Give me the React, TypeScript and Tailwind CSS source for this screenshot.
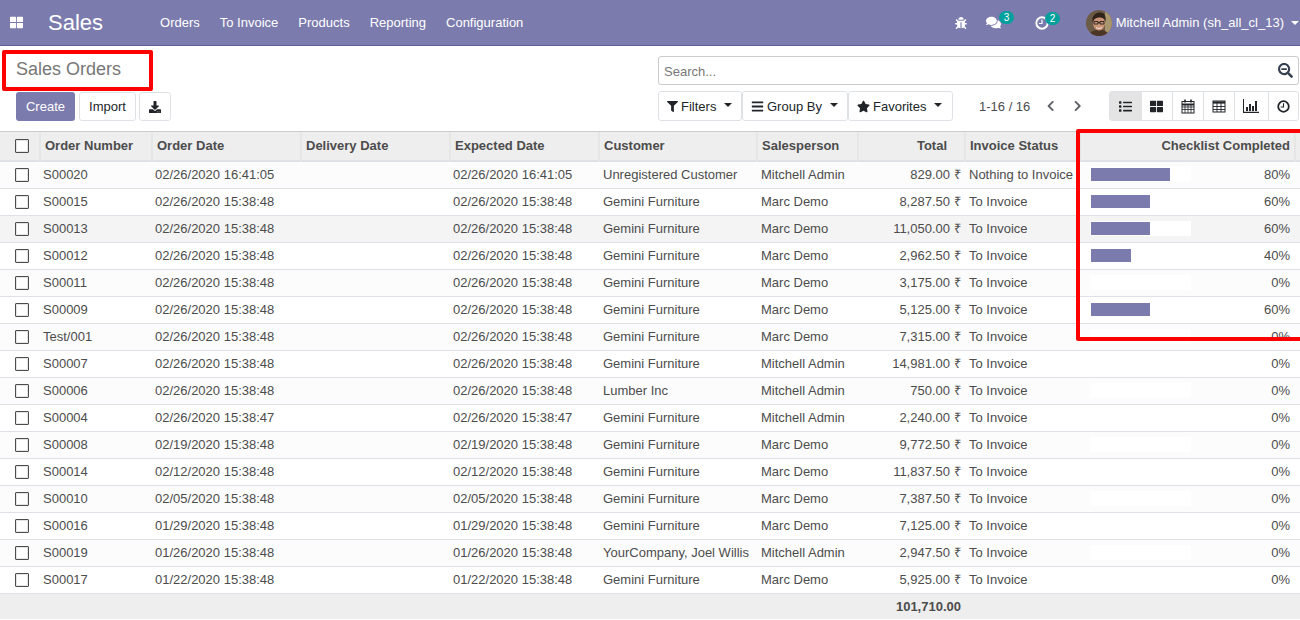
import { FaBug, FaComments, FaThLarge, FaDownload, FaFilter, FaBars, FaStar, FaList, FaSearchMinus, FaChevronLeft, FaChevronRight } from "react-icons/fa";

const menus = ["Orders", "To Invoice", "Products", "Reporting", "Configuration"];

const columns = [
  { label: "Order Number", width: "w-[112px]" },
  { label: "Order Date", width: "w-[149px]" },
  { label: "Delivery Date", width: "w-[149px]" },
  { label: "Expected Date", width: "w-[149px]" },
  { label: "Customer", width: "w-[158px]" },
  { label: "Salesperson", width: "w-[101px]" },
];

const orders = [
  ["S00020", "02/26/2020 16:41:05", "02/26/2020 16:41:05", "Unregistered Customer", "Mitchell Admin", "829.00", "Nothing to Invoice", 80],
  ["S00015", "02/26/2020 15:38:48", "02/26/2020 15:38:48", "Gemini Furniture", "Marc Demo", "8,287.50", "To Invoice", 60],
  ["S00013", "02/26/2020 15:38:48", "02/26/2020 15:38:48", "Gemini Furniture", "Marc Demo", "11,050.00", "To Invoice", 60],
  ["S00012", "02/26/2020 15:38:48", "02/26/2020 15:38:48", "Gemini Furniture", "Marc Demo", "2,962.50", "To Invoice", 40],
  ["S00011", "02/26/2020 15:38:48", "02/26/2020 15:38:48", "Gemini Furniture", "Marc Demo", "3,175.00", "To Invoice", 0],
  ["S00009", "02/26/2020 15:38:48", "02/26/2020 15:38:48", "Gemini Furniture", "Marc Demo", "5,125.00", "To Invoice", 60],
  ["Test/001", "02/26/2020 15:38:48", "02/26/2020 15:38:48", "Gemini Furniture", "Marc Demo", "7,315.00", "To Invoice", 0],
  ["S00007", "02/26/2020 15:38:48", "02/26/2020 15:38:48", "Gemini Furniture", "Mitchell Admin", "14,981.00", "To Invoice", 0],
  ["S00006", "02/26/2020 15:38:48", "02/26/2020 15:38:48", "Lumber Inc", "Mitchell Admin", "750.00", "To Invoice", 0],
  ["S00004", "02/26/2020 15:38:47", "02/26/2020 15:38:47", "Gemini Furniture", "Mitchell Admin", "2,240.00", "To Invoice", 0],
  ["S00008", "02/19/2020 15:38:48", "02/19/2020 15:38:48", "Gemini Furniture", "Marc Demo", "9,772.50", "To Invoice", 0],
  ["S00014", "02/12/2020 15:38:48", "02/12/2020 15:38:48", "Gemini Furniture", "Marc Demo", "11,837.50", "To Invoice", 0],
  ["S00010", "02/05/2020 15:38:48", "02/05/2020 15:38:48", "Gemini Furniture", "Marc Demo", "7,387.50", "To Invoice", 0],
  ["S00016", "01/29/2020 15:38:48", "01/29/2020 15:38:48", "Gemini Furniture", "Marc Demo", "7,125.00", "To Invoice", 0],
  ["S00019", "01/26/2020 15:38:48", "01/26/2020 15:38:48", "YourCompany, Joel Willis", "Mitchell Admin", "2,947.50", "To Invoice", 0],
  ["S00017", "01/22/2020 15:38:48", "01/22/2020 15:38:48", "Gemini Furniture", "Marc Demo", "5,925.00", "To Invoice", 0],
] as const;

function Avatar() {
  return (
    <svg viewBox="0 0 26 26" className="h-[26px] w-[26px] rounded-full">
      <rect width="26" height="26" fill="#6b5a45" />
      <rect x="19" width="7" height="26" fill="#a8966e" />
      <path d="M3 26c1-5 5-6 10-6s9 1 10 6z" fill="#4a3527" />
      <ellipse cx="13" cy="13" rx="6" ry="7.500" fill="#c99377" />
      <path d="M6.500 12C5.500 5 10 2.500 14 2.500s6.500 3 5.500 9.500c-.8-3.500-3-4.500-6-4.500s-5.300 1-6.500 4.500z" fill="#2e221b" />
      <path d="M8 11.500h4v2.500H8zM14 11.500h4v2.500h-4zM12 12.500h2" fill="none" stroke="#241d1a" strokeWidth="0.9" />
      <path d="M10 17.500c2 1.200 4 1.200 6 0" stroke="#f2e6dc" strokeWidth="1" fill="none" />
    </svg>
  );
}

function ClockIcon({ className }: { className: string }) {
  return (
    <svg viewBox="0 0 14 14" className={className} fill="none" stroke="currentColor">
      <circle cx="7" cy="7" r="5.700" strokeWidth="1.900" />
      <path d="M7 3.500V7.500H4" strokeWidth="1.200" />
    </svg>
  );
}

function CalendarIcon() {
  return (
    <svg viewBox="0 0 14 15" className="h-[15px] w-[14px]" fill="none" stroke="currentColor">
      <rect x="1" y="2.500" width="12" height="11.500" strokeWidth="1" />
      <path d="M1 5.500h12" strokeWidth="2" />
      <path d="M1 8h12M1 10.500h12M4 6v8M7 6v8M10 6v8" strokeWidth="0.800" />
      <path d="M4 .500v3M10 .500v3" strokeWidth="1.600" />
    </svg>
  );
}

function TableIcon() {
  return (
    <svg viewBox="0 0 14 13" className="h-[13px] w-[14px]" fill="none" stroke="currentColor">
      <rect x="1" y="1" width="12" height="11" strokeWidth="1" />
      <path d="M1 2.500h12" strokeWidth="2.200" />
      <path d="M1 6.500h12M1 9.500h12M5 3v9M9 3v9" strokeWidth="0.900" />
    </svg>
  );
}

function BarsIcon() {
  return (
    <svg viewBox="0 0 16 14" className="h-[14px] w-[16px]" fill="currentColor">
      <path d="M0 0h1v12.800h15V14H0z" />
      <path d="M3 8h2v4H3zM6 5h2v7H6zM9 7h2v5H9zM12 2h2v10h-2z" />
    </svg>
  );
}

function Checkbox() {
  return <span className="block h-[14px] w-[14px] rounded-[1px] border border-[#4c4c4c] bg-white shadow-[inset_0_0_0_1px_#e4e4e4]" />;
}

function ToolbarButton({ icon, label, width }: { icon: React.ReactNode; label: string; width: string }) {
  return (
    <button className={`flex h-[30px] ${width} items-center whitespace-nowrap rounded-[3px] border border-[#dee2e6] bg-white pl-[8px] pt-px text-[13px] text-[#212529]`}>
      {icon}
      <span className="ml-[3px]">{label}</span>
      <span className="ml-[8px] mb-[4px] h-0 w-0 border-x-[4px] border-t-[4px] border-x-transparent border-t-[#212529]" />
    </button>
  );
}

export default function App() {
  return (
    <div className="relative h-[620px] w-[1300px] overflow-hidden bg-white font-['Liberation_Sans',Arial,sans-serif] text-[13px] text-[#4c4c4c]">
      <header className="flex h-[46px] items-center border-b border-[#5f5e97] bg-[#7c7bad] text-white">
        <FaThLarge className="ml-[10px] h-[13px] w-[13px]" />
        <span className="ml-[25px] text-[22px] leading-none">Sales</span>
        <nav className="ml-[57px] flex gap-[20px] text-[13px]">
          {menus.map((m) => (
            <span key={m}>{m}</span>
          ))}
        </nav>
        <div className="ml-auto flex items-center">
          <FaBug className="h-[12px] w-[12px]" />
          <span className="relative ml-[19px]">
            <FaComments className="h-[15px] w-[15px]" />
            <span className="absolute left-[13px] top-[-4px] rounded-full bg-[#00a09d] px-[5px] text-[10px] leading-[13px]">3</span>
          </span>
          <span className="relative ml-[34px]">
            <ClockIcon className="h-[14px] w-[14px]" />
            <span className="absolute left-[10px] top-[-4px] rounded-full bg-[#00a09d] px-[5px] text-[10px] leading-[13px]">2</span>
          </span>
          <span className="ml-[37px]">
            <Avatar />
          </span>
          <span className="ml-[4px]">Mitchell Admin (sh_all_cl_13)</span>
          <span className="ml-[7px] mr-[1px] h-0 w-0 border-x-[4px] border-t-[4px] border-x-transparent border-t-white" />
        </div>
      </header>

      <div className="flex h-[86px] border-b border-[#cccccc] pl-[16px] pr-[1px]">
        <div className="w-[642px] shrink-0">
          <h1 className="mt-[11px] text-[18px] leading-[24px] text-[#777777]">Sales Orders</h1>
          <div className="mt-[11px] flex gap-[4px]">
            <button className="h-[29px] w-[59px] rounded-[3px] bg-[#7c7bad] text-white">Create</button>
            <button className="h-[29px] w-[57px] rounded-[3px] border border-[#dee2e6] bg-white text-[#212529]">Import</button>
            <button className="-ml-px flex h-[29px] w-[32px] items-center justify-center rounded-[3px] border border-[#dee2e6] bg-white text-[#212529]">
              <FaDownload className="h-[12px] w-[12px]" />
            </button>
          </div>
        </div>
        <div className="mt-[10px] w-[641px] shrink-0">
          <div className="flex h-[29px] items-center justify-between rounded-[3px] border border-[#cccccc] pl-[5px] pr-[5px]">
            <span className="pt-[2px] text-[#777777]">Search...</span>
            <FaSearchMinus className="h-[15px] w-[15px] text-[#374151]" />
          </div>
          <div className="mt-[6px] flex items-center">
            <div className="flex">
              <ToolbarButton icon={<FaFilter className="h-[11px] w-[11px]" />} label="Filters" width="w-[84px]" />
              <ToolbarButton icon={<FaBars className="h-[13px] w-[13px]" />} label="Group By" width="w-[106px]" />
              <ToolbarButton icon={<FaStar className="h-[13px] w-[13px]" />} label="Favorites" width="w-[105px]" />
            </div>
            <span className="ml-[26px] whitespace-nowrap pt-px">1-16 / 16</span>
            <FaChevronLeft className="ml-[16px] h-[12px] w-[10px] text-[#5f6368]" />
            <FaChevronRight className="ml-[17px] h-[12px] w-[10px] text-[#5f6368]" />
            <div className="ml-[27px] flex h-[30px] items-center rounded-[3px] border border-[#dee2e6] text-[#212529]">
              <span className="flex h-full w-[32px] items-center justify-center bg-[#e4e4e4]"><FaList className="h-[13px] w-[13px]" /></span>
              <span className="flex h-full w-[31px] items-center justify-center border-r border-[#dee2e6]"><FaThLarge className="h-[13px] w-[13px]" /></span>
              <span className="flex h-full w-[31px] items-center justify-center border-r border-[#dee2e6]"><CalendarIcon /></span>
              <span className="flex h-full w-[31px] items-center justify-center border-r border-[#dee2e6]"><TableIcon /></span>
              <span className="flex h-full w-[34px] items-center justify-center border-r border-[#dee2e6]"><BarsIcon /></span>
              <span className="flex h-full w-[29px] items-center justify-center"><ClockIcon className="h-[13px] w-[13px]" /></span>
            </div>
          </div>
        </div>
      </div>

      <table className="w-[1300px] table-fixed border-collapse">
        <thead>
          <tr className="h-[29px] border-b-2 border-[#dee2e6] bg-[#eeeeee] text-left font-bold">
            <th className="w-[40px] border-r-2 border-[#e6e6e6] pl-[15px]"><Checkbox /></th>
            {columns.map((c) => (
              <th key={c.label} className={`${c.width} border-r-2 border-[#e6e6e6] pl-[4px]`}>{c.label}</th>
            ))}
            <th className="w-[107px] border-r-2 border-[#e6e6e6] pr-[17px] text-right">Total</th>
            <th className="w-[115px] border-r-0 pl-[4px]">Invoice Status</th>
            <th className="w-[215px] border-x-2 border-[#e6e6e6] pr-[4px] text-right">Checklist Completed</th>
            <th />
          </tr>
        </thead>
        <tbody>
          {orders.map((o, i) => (
            <tr key={o[0]} className={`h-[27px] border-b border-[#dee2e6] ${i === 2 ? "bg-[#f4f4f4]" : i % 2 === 0 ? "bg-[#fcfcfc]" : "bg-white"}`}>
              <td className="pl-[15px]"><Checkbox /></td>
              <td className="pl-[3px]">{o[0]}</td>
              <td className="pl-[3px]">{o[1]}</td>
              <td />
              <td className="pl-[3px]">{o[2]}</td>
              <td className="truncate pl-[4px]">{o[3]}</td>
              <td className="truncate pl-[4px]">{o[4]}</td>
              <td className="pr-[4px] text-right">{o[5]}<span className="ml-1">₹</span></td>
              <td className="whitespace-nowrap pl-[4px]">{o[6]}</td>
              <td className="pr-[5px] text-right">
                <div className="flex items-center justify-between pl-[10px]">
                  <div className="h-[15px] w-[101px] bg-white p-px">
                    <div className="h-[13px] bg-[#7c7bad]" style={{ width: `${o[7]}%` }} />
                  </div>
                  <span>{o[7]}%</span>
                </div>
              </td>
              <td />
            </tr>
          ))}
        </tbody>
        <tfoot>
          <tr className="h-[26px] bg-[#eeeeee] font-bold">
            <td colSpan={7} />
            <td className="pr-[4px] text-right">101,710.00</td>
            <td colSpan={3} />
          </tr>
        </tfoot>
      </table>

      <div className="pointer-events-none absolute left-[2px] top-[50px] h-[41px] w-[151px] rounded-[2px] border-4 border-[#ff0000]" />
      <div className="pointer-events-none absolute left-[1076px] top-[129px] h-[212px] w-[230px] rounded-[2px] border-4 border-[#ff0000]" />
    </div>
  );
}
